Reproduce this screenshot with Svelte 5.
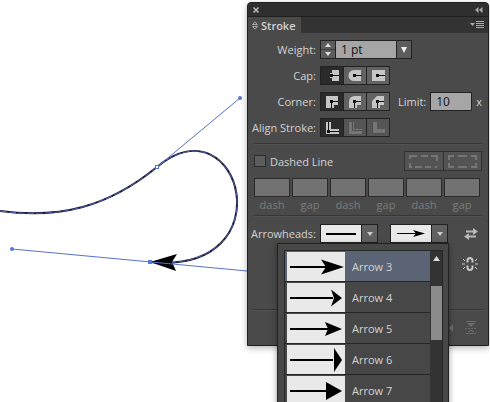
<script lang="ts">
  const arrows = [
    { name: 'Arrow 3', head: 'M34 7.500l23 7.500-23 7.500 5-7.500z' },
    { name: 'Arrow 4', head: 'M44 6.500l11 8.500-11 8.500 3-8.500z' },
    { name: 'Arrow 5', head: 'M38 8l17 7-17 7 3-7z' },
    { name: 'Arrow 6', head: 'M47 3l8 12-8 12z' },
    { name: 'Arrow 7', head: 'M39 6l16 9-16 9z' },
  ];

  const caps = [
    { name: 'Butt Cap', shape: 'M11 3h7v11h-7zM9 6h2v5H9z', x: 9 },
    { name: 'Round Cap', shape: 'M17 3v11h-7a5.500 5.500 0 0 1 0-11z', x: 9 },
    { name: 'Projecting Cap', shape: 'M5 3h13v11H5z', x: 9 },
  ];

  const corners = [
    { name: 'Miter Join', shape: 'M5 3h12v9h-4v3H5z' },
    { name: 'Round Join', shape: 'M5 15V9q0-6 6-6h6v9h-4v3z' },
    { name: 'Bevel Join', shape: 'M5 15V8l5-5h7v9h-4v3z' },
  ];

  const aligns = [
    { name: 'Align Stroke to Center', line: 'M7.500 3v9.500H18' },
    { name: 'Align Stroke to Inside', line: 'M8.500 3v8.500H18' },
    { name: 'Align Stroke to Outside', line: 'M5.500 3v11.500H18' },
  ];

  let weight = $state('1 pt');
  let limit = $state('10');
  let cap = $state(0);
  let corner = $state(0);
  let align = $state(0);
  let dashed = $state(false);
  let dashes = $state(['', '', '', '', '', '']);
  let selected = $state(0);
  let menuOpen = $state(true);

  function step(by: number) {
    weight = `${Math.max(0, (parseFloat(weight) || 0) + by)} pt`;
  }
</script>

<main class="workspace">
  <svg class="artwork" viewBox="0 0 490 402" aria-label="Artboard">
    <path class="stroke" d="M0 211C60 219 108 207 157 167C240 98 288 275 150 262" />
    <path class="path" d="M0 211C60 219 108 207 157 167C240 98 288 275 150 262" />
    <path d="M150 262l27-8-5 8 4 9z" />
    <path class="handle" d="M157 167L240 98M12 249L290 275" />
    <circle class="point" cx="240" cy="98" r="2" />
    <circle class="point" cx="12" cy="249" r="2" />
    <rect class="anchor" x="155.500" y="165.500" width="3" height="3" />
    <rect class="point" x="148" y="260" width="4" height="4" />
  </svg>

  <section class="panel" aria-label="Stroke panel">
    <div class="title-bar">
      <button class="plain" aria-label="Close">
        <svg width="6" height="6"><path d="M.5.5l5 5M5.500.5l-5 5" stroke="#bbb" stroke-width="1.500" /></svg>
      </button>
      <button class="plain" aria-label="Collapse">
        <svg width="8" height="6" fill="#aaa"><path d="M3.500 0v6L0 3zM7.500 0v6L4 3z" /></svg>
      </button>
    </div>

    <header class="tabs">
      <button class="tab">
        <svg width="6" height="9" fill="none" stroke="#aaa"><path d="M.5 3.500L3 .8l2.500 2.700zM.5 5.500L3 8.200l2.500-2.700z" /></svg>
        Stroke
      </button>
      <button class="plain" aria-label="Panel menu">
        <svg width="14" height="9" fill="#aaa"><path d="M0 2h5L2.500 5zM6 0h8v1H6zM6 2h8v1H6zM6 4h8v1H6zM6 6h8v1H6z" /></svg>
      </button>
    </header>

    <div class="group main">
      <div class="row">
        <label class="label" for="weight">Weight:</label>
        <div class="combo">
          <div class="spinner">
            <button aria-label="Increase weight" onclick={() => step(1)}>
              <svg width="6" height="4" fill="#ddd"><path d="M3 0l3 4H0z" /></svg>
            </button>
            <button aria-label="Decrease weight" onclick={() => step(-1)}>
              <svg width="6" height="4" fill="#ddd"><path d="M0 0h6L3 4z" /></svg>
            </button>
          </div>
          <input id="weight" class="field" type="text" bind:value={weight} />
          <button class="drop" aria-label="Weight presets">
            <svg width="6" height="6" fill="#eee"><path d="M0 0h6L3 6z" /></svg>
          </button>
        </div>
      </div>

      <div class="row">
        <span class="label">Cap:</span>
        <div class="toggles">
          {#each caps as item, i}
            <button class:on={cap === i} aria-label={item.name} aria-pressed={cap === i} onclick={() => (cap = i)}>
              <svg width="22" height="17">
                <path d={item.shape} fill="#c6c6c6" />
                <path d="M{item.x} 7h3v1h6v1h-6v1h-3z" fill="#111" />
              </svg>
            </button>
          {/each}
        </div>
      </div>

      <div class="row">
        <span class="label">Corner:</span>
        <div class="toggles">
          {#each corners as item, i}
            <button
              class:on={corner === i}
              aria-label={item.name}
              aria-pressed={corner === i}
              onclick={() => (corner = i)}
            >
              <svg width="22" height="17">
                <path d={item.shape} fill="#c6c6c6" />
                <path d="M9 7h3v1h5v1h-5v1h-1v5h-1v-5H9z" fill="#111" />
              </svg>
            </button>
          {/each}
        </div>
        <label class="limit" for="limit">Limit:</label>
        <input id="limit" class="field small" type="text" bind:value={limit} />
        <span class="unit">x</span>
      </div>

      <div class="row">
        <span class="label">Align Stroke:</span>
        <div class="toggles">
          {#each aligns as item, i}
            <button
              class:on={align === i}
              class:dim={i > 0}
              aria-label={item.name}
              aria-pressed={align === i}
              onclick={() => (align = i)}
            >
              <svg width="22" height="17">
                <path d="M5 3h5v7h8v5H5z" fill={i > 0 ? '#757575' : '#c6c6c6'} />
                <path d={item.line} fill="none" stroke={i > 0 ? '#4e4e4e' : '#111'} />
                {#if i === 0}<path d="M6 11h3v3H6z" fill="#111" />{/if}
              </svg>
            </button>
          {/each}
        </div>
      </div>
    </div>

    <div class="group dashed">
      <div class="dash-head">
        <label class="check">
          <input type="checkbox" bind:checked={dashed} />
          Dashed Line
        </label>
        <div class="dash-modes">
          <button aria-label="Preserve exact dash and gap lengths" disabled={!dashed}>
            <svg width="30" height="13"><path d="M1 4V1h7M12 1h7M22 1h6v5M1 8v4h2M6 12h7M16 12h6M26 12h2" /></svg>
          </button>
          <button aria-label="Align dashes to corners" disabled={!dashed}>
            <svg width="30" height="13"><path d="M1 5V1h5M10 1h9M23 1h5v4M1 8v4h5M10 12h9M23 12h5V8" /></svg>
          </button>
        </div>
      </div>

      <div class="dash-fields">
        {#each dashes as _, i}
          <label>
            <input type="text" disabled={!dashed} bind:value={dashes[i]} />
            {i % 2 ? 'gap' : 'dash'}
          </label>
        {/each}
      </div>
    </div>

    <div class="group heads">
      <div class="row">
        <span class="label">Arrowheads:</span>
        <button class="picker" aria-label="Start arrowhead">
          <svg width="40" height="17"><path d="M5 8h30v2H5z" /></svg>
          <span class="picker-drop"><svg width="6" height="4" fill="#ccc"><path d="M0 0h6L3 4z" /></svg></span>
        </button>
        <button
          class="picker end"
          aria-label="End arrowhead"
          aria-haspopup="listbox"
          aria-expanded={menuOpen}
          onclick={() => (menuOpen = !menuOpen)}
        >
          <svg width="40" height="17"><path d="M6 8h20v1H6zM22 5l12 3.500L22 12l3-3.500z" /></svg>
          <span class="picker-drop"><svg width="6" height="4" fill="#ccc"><path d="M0 0h6L3 4z" /></svg></span>
        </button>
        <button class="plain tool" aria-label="Swap arrowheads">
          <svg width="14" height="12" fill="#b8b8b8"><path d="M2 2.500h7V0l5 3.500L9 7V4.500H2zM12 7.500H5V5L0 8.500 5 12V9.500h7z" /></svg>
        </button>
      </div>
      <div class="link-row">
        <button class="plain" aria-label="Link arrowhead scales">
          <svg width="16" height="14" fill="none" stroke="#c8c8c8">
            <path d="M5.500 5.500v-2a2.500 2.500 0 0 1 5 0v2M5.500 8.500v2a2.500 2.500 0 0 0 5 0v-2" stroke-width="2" />
            <path d="M0 7h3M13 7h3M1 2l2 2M15 2l-2 2M1 12l2-2M15 12l-2-2" />
          </svg>
        </button>
      </div>
    </div>

    <div class="group profile">
      <svg width="4" height="8" fill="#6c6c6c"><path d="M4 0v8L0 4z" /></svg>
      <button class="plain" aria-label="Flip across" disabled>
        <svg width="12" height="14" fill="#6c6c6c"><path d="M1 0h10v1H1zM2 2h8L6 6zM0 7h2v1H0zM3 7h2v1H3zM6 7h2v1H6zM9 7h2v1H9zM5 9h2v1H5zM3 10h2v1H3zM7 10h2v1H7zM1 12h10v1H1z" /></svg>
      </button>
    </div>

    {#if menuOpen}
      <div class="menu">
        <div class="menu-frame">
          <div class="options" role="listbox" aria-label="Arrowhead">
            {#each arrows as arrow, i}
              <button
                class="option"
                class:selected={selected === i}
                role="option"
                aria-selected={selected === i}
                onclick={() => (selected = i)}
              >
                <svg width="58" height="29">
                  <path d="M3 14h43v2H3z" />
                  <path d={arrow.head} />
                </svg>
                {arrow.name}
              </button>
            {/each}
          </div>
          <div class="scroll">
            <svg width="7" height="5" fill="#ddd"><path d="M3.500 0L7 5H0z" /></svg>
            <div class="thumb"></div>
          </div>
        </div>
      </div>
    {/if}
  </section>
</main>

<style>
  :global(body) {
    margin: 0;
    background: #fff;
  }

  * {
    box-sizing: border-box;
  }

  .workspace {
    position: relative;
    height: 100vh;
    overflow: hidden;
    font-family: 'Open Sans', 'Noto Sans', sans-serif;
    font-size: 11px;
    line-height: 15px;
    color: #d2d2d2;
  }

  svg {
    display: block;
    flex: none;
  }

  .artwork {
    width: 490px;
  }

  .stroke {
    fill: none;
    stroke: #15152c;
    stroke-width: 2;
  }

  .path,
  .handle {
    fill: none;
    stroke: #5573cc;
    stroke-width: 1;
  }

  .path {
    stroke: #5565b8;
    stroke-dasharray: 7 2;
  }

  .point {
    fill: #5578dc;
  }

  .anchor {
    fill: #fff;
    stroke: #5573cc;
  }

  button,
  input {
    font: inherit;
    color: inherit;
    margin: 0;
    padding: 0;
    border: 0;
    border-radius: 0;
    background: none;
  }

  .panel {
    position: absolute;
    top: 2px;
    right: 1px;
    width: 242px;
    background: #4a4a4a;
    border: 1px solid #1f1f1f;
    border-radius: 4px 4px 0 0;
    box-shadow: 0 2px 6px rgba(0, 0, 0, 0.3);
  }

  .title-bar {
    display: flex;
    align-items: center;
    justify-content: space-between;
    height: 13px;
    padding: 0 5px;
    background: #2f2f2f;
    border-radius: 3px 3px 0 0;
  }

  .tabs {
    display: flex;
    align-items: center;
    justify-content: space-between;
    height: 17px;
    padding-right: 4px;
    background: #333;
    border-top: 1px solid #1f1f1f;
  }

  .tab {
    display: flex;
    align-items: center;
    gap: 3px;
    height: 17px;
    padding: 0 5px 0 4px;
    background: #4a4a4a;
    font-weight: 600;
  }

  .group + .group {
    border-top: 1px solid #363636;
    box-shadow: inset 0 1px #525252;
    margin: 0 6px;
  }

  .main {
    display: flex;
    flex-direction: column;
    gap: 7px;
    padding: 7px 6px 6px;
  }

  .row {
    display: flex;
    align-items: center;
    height: 19px;
  }

  .label {
    display: flex;
    justify-content: flex-end;
    width: 62px;
    margin-right: 4px;
    white-space: nowrap;
  }

  .combo,
  .toggles {
    display: flex;
    height: 19px;
    background: #5c5c5c;
    border: 1px solid #222;
  }

  .spinner {
    display: flex;
    flex-direction: column;
    width: 14px;
  }

  .spinner button {
    display: grid;
    place-items: center;
    flex: 1;
  }

  .spinner button + button {
    border-top: 1px solid #3b3b3b;
  }

  .field {
    width: 62px;
    padding: 0 5px;
    background: #a6a6a6;
    border: solid #222;
    border-width: 0 1px;
    color: #111;
    font-size: 12px;
  }

  .field.small {
    width: 42px;
    height: 19px;
    border-width: 1px;
  }

  .drop {
    display: grid;
    place-items: center;
    width: 14px;
  }

  .toggles button + button {
    border-left: 1px solid #222;
  }

  .toggles button {
    background: #626262;
  }

  .toggles button.on {
    background: #2b2b2b;
  }

  .toggles button.dim {
    background: #555;
  }

  .limit {
    margin-left: 8px;
    margin-right: 4px;
  }

  .unit {
    margin-left: 4px;
  }

  .dashed {
    padding: 7px 0 3px;
  }

  .dash-head {
    display: flex;
    align-items: center;
    justify-content: space-between;
    height: 20px;
  }

  .check {
    display: flex;
    align-items: center;
    gap: 4px;
  }

  .check input {
    appearance: none;
    width: 12px;
    height: 12px;
    background: #5c5c5c;
    border: 1px solid #2a2a2a;
  }

  .check input:checked {
    background: #bbb;
  }

  .dash-modes {
    display: flex;
    height: 20px;
    border: 1px solid #303030;
    background: #535353;
  }

  .dash-modes button {
    display: grid;
    place-items: center;
    width: 38px;
  }

  .dash-modes button + button {
    border-left: 1px solid #303030;
  }

  .dash-modes path {
    fill: none;
    stroke: #757575;
    stroke-width: 2;
  }

  .dash-fields {
    display: grid;
    grid-template-columns: repeat(6, 1fr);
    gap: 2px;
    margin: 7px 2px 0 0;
  }

  .dash-fields label {
    color: #7c7c7c;
    text-align: center;
  }

  .dash-fields input {
    display: block;
    width: 100%;
    height: 19px;
    background: #727272;
    border: 1px solid #2a2a2a;
  }

  .heads {
    padding-top: 8px;
  }

  .picker {
    display: flex;
    height: 19px;
    background: #e9e9e9;
    border: 1px solid #222;
  }

  .picker.end {
    margin-left: 12px;
  }

  .picker-drop {
    display: grid;
    place-items: center;
    width: 16px;
    height: 17px;
    background: #606060;
    border-left: 1px solid #222;
  }

  .tool {
    margin-left: auto;
    margin-right: 4px;
  }

  .link-row {
    display: flex;
    justify-content: flex-end;
    padding: 14px 4px 38px;
  }

  .profile {
    display: flex;
    align-items: center;
    justify-content: flex-end;
    gap: 12px;
    height: 36px;
    padding-right: 5px;
  }

  .menu {
    position: absolute;
    top: 240px;
    right: 39px;
    width: 172px;
    padding: 6px 5px 6px 6px;
    background: #474747;
    border: 1px solid #222;
    box-shadow: 0 2px 6px rgba(0, 0, 0, 0.4);
  }

  .menu-frame {
    display: flex;
    border: 1px solid #262626;
  }

  .options {
    flex: 1;
  }

  .option {
    display: flex;
    align-items: center;
    gap: 7px;
    width: 100%;
    height: 31px;
    padding-left: 2px;
    border-bottom: 1px solid #262626;
    text-align: left;
  }

  .option svg {
    background: #e9e9e9;
  }

  .option.selected {
    background: #5a6475;
  }

  .scroll {
    display: flex;
    flex-direction: column;
    align-items: center;
    gap: 25px;
    width: 12px;
    padding-top: 5px;
    background: #333;
  }

  .thumb {
    width: 11px;
    height: 54px;
    background: #8b8b8b;
  }
</style>
